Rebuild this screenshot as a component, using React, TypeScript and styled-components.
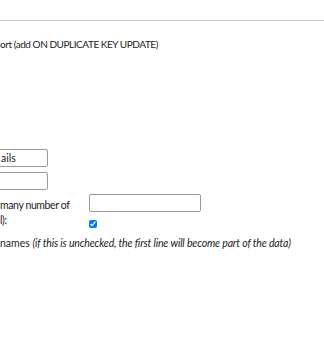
import React from "react"
import styled, { createGlobalStyle } from "styled-components"

const GlobalStyle = createGlobalStyle`
  html, body {
    margin: 0;
    padding: 0;
    background: #ffffff;
  }
  body {
    font-family: Lato, "Open Sans", sans-serif;
    font-size: 10.5px;
    color: #1c1c1c;
    overflow: hidden;
  }
`

export const S = {
  Page: styled.div`
    width: 324px;
    height: 340px;
    padding-top: 20px;
    box-sizing: border-box;
  `,

  Rule: styled.hr`
    margin: 0;
    border: 0;
    border-top: 1px solid #c6c6c6;
  `,

  // caps run narrow in the original face, so squeeze this line a bit
  Option: styled.p`
    margin: 16px 0 0;
    font-size: 10px;
    line-height: 14px;
    white-space: nowrap;
    letter-spacing: -0.45px;
  `,

  Fields: styled.div`
    display: flex;
    flex-direction: column;
    gap: 5px;
    margin-top: 98px;
    margin-left: -4px;
  `,

  TextInput: styled.input<{ $width: number }>`
    box-sizing: border-box;
    width: ${(p) => p.$width}px;
    height: 18px;
    margin: 0;
    padding: 0 4px;
    border: 1px solid #9a9a9a;
    border-radius: 2px;
    font: inherit;
    color: #1c1c1c;
    background: #fff;
  `,

  SkipRow: styled.div`
    display: grid;
    grid-template-columns: 89px 112px;
    margin-top: 4px;
  `,

  SkipLabel: styled.label`
    padding-top: 4px;
    line-height: 15px;
    letter-spacing: -0.4px;
  `,

  SkipControls: styled.div`
    display: flex;
    flex-direction: column;
    align-items: flex-start;
    gap: 8px;
  `,

  Check: styled.input`
    width: 8px;
    height: 8px;
    margin: 0;
    accent-color: #0075ff;
  `,

  Note: styled.p`
    margin: 8px 0 0;
    line-height: 14px;
    white-space: nowrap;
  `,

  Hint: styled.em`
    font-style: italic;
    letter-spacing: -0.15px;
  `,
}

export default function App() {
  return (
    <>
      <GlobalStyle />
      <S.Page>
        <S.Rule />
        <S.Option>ort (add ON DUPLICATE KEY UPDATE)</S.Option>

        <S.Fields>
          <S.TextInput $width={52} defaultValue="ails" />
          <S.TextInput $width={52} defaultValue="" />
        </S.Fields>

        <S.SkipRow>
          <S.SkipLabel>
            many number of
            <br />
            l):
          </S.SkipLabel>
          <S.SkipControls>
            <S.TextInput $width={112} defaultValue="" />
            <S.Check type="checkbox" defaultChecked />
          </S.SkipControls>
        </S.SkipRow>

        <S.Note>
          names{" "}
          <S.Hint>
            (if this is unchecked, the first line will become part of the data)
          </S.Hint>
        </S.Note>
      </S.Page>
    </>
  )
}
